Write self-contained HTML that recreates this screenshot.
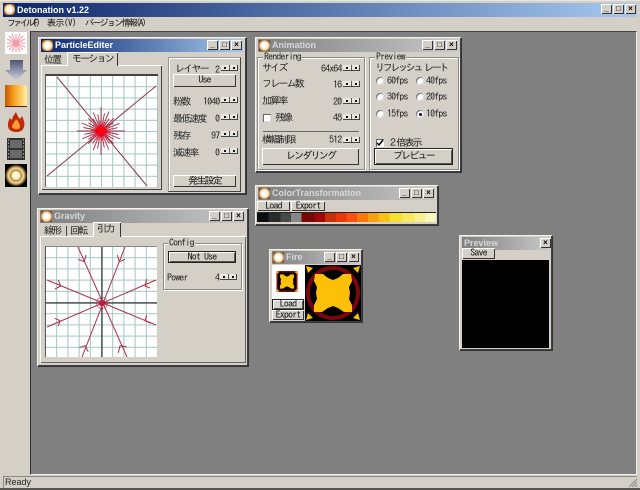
<!DOCTYPE html>
<html><head><meta charset="utf-8"><style>
html,body{margin:0;padding:0;background:#000}
#root{position:relative;width:640px;height:490px;overflow:hidden;background:#d4d0c8;font:10px "IPAGothic","Liberation Sans","Noto Sans CJK JP",sans-serif;color:#111;filter:blur(.3px)}
.a{position:absolute;white-space:nowrap}
.win{position:absolute;background:#d4d0c8;box-sizing:border-box;box-shadow:inset 1px 1px 0 #f4f2ec,inset -1px -1px 0 #404040,1px 1px 0 #333}
.tb{position:absolute;left:3px;right:3px;top:2px;height:13px;background:linear-gradient(90deg,#808080,#c8c8c8);color:#d8d8d8;font:bold 9px/13px "Liberation Sans",sans-serif;padding-left:14px}
.tb.on{background:linear-gradient(90deg,#0a246a,#a6caf0);color:#fff}
.ic{position:absolute;left:1px;top:1px;width:11px;height:11px;border-radius:2px;background:radial-gradient(circle,#fff 30%,#f5d79a 55%,#6b2a10 85%)}
.wb{position:absolute;top:1px;width:11px;height:10px;background:#d4d0c8;box-shadow:inset 1px 1px 0 #fff,inset -1px -1px 0 #333;color:#000;font:bold 8px/10px "Liberation Sans",sans-serif;text-align:center}
.btn{position:absolute;background:#d4d0c8;box-sizing:border-box;box-shadow:inset 1px 1px 0 #fff,inset -1px -1px 0 #333;text-align:center;color:#111;font:10px "IPAGothic","Liberation Sans",sans-serif;letter-spacing:-.9px}
.btn.d{outline:1px solid #222;outline-offset:-1px;box-shadow:inset 2px 2px 0 #fff,inset -2px -2px 0 #555}
.btn.j{letter-spacing:-1.800px}
.sp{position:absolute;width:17px;height:6px;background:linear-gradient(90deg,#e8e6e0 0 8px,#555 8px 9px,#e8e6e0 9px);box-shadow:inset 0 -1px 0 #444,inset -1px 0 0 #444}
.sp:before,.sp:after{content:"";position:absolute;top:2px;width:2px;height:2px;background:#111}
.sp:before{left:3px}.sp:after{left:12px}
.grp{position:absolute;box-sizing:border-box;border:1px solid #8c8a84;box-shadow:1px 1px 0 #fff,inset 1px 1px 0 #fff}
.lg{position:absolute;top:-6px;left:5px;background:#d4d0c8;padding:0 1px;font:10px/10px "IPAGothic","Liberation Sans",sans-serif;letter-spacing:-.9px;color:#222}
.l{position:absolute;white-space:nowrap;font-size:10px;line-height:12px;letter-spacing:-1.800px;color:#222}
.m{font:10px/10px "IPAGothic","Liberation Sans",sans-serif;letter-spacing:-.9px}
.rd{position:absolute;width:8px;height:8px;border-radius:50%;background:#fff;box-shadow:inset 1px 1px 0 #777,inset -1px -1px 0 #ddd}
.pn{position:absolute;box-sizing:border-box;border:1px solid #999;border-right-color:#444;border-bottom-color:#444;box-shadow:inset 1px 1px 0 #fff}
</style></head><body><div id="root">
<svg width="0" height="0" style="position:absolute"><defs>
<pattern id="g" width="11.2" height="11.2" patternUnits="userSpaceOnUse"><rect width="11.2" height="11.2" fill="#fff"/><path d="M10.7 0V11.2M0 10.7H11.2" stroke="#a3c4c4" stroke-width="1"/></pattern>
<path id="q" d="M55 55l24 0M55 55l17.600 3.500M55 55l19.400 8M55 55l12.500 8.300M55 55l12.700 12.700M55 55l8.300 12.500M55 55l7.700 18.500M55 55l3.300 16.700" fill="none"/>
<linearGradient id="ag" x1="0" y1="0" x2="0" y2="1"><stop offset="0" stop-color="#505470"/><stop offset="1" stop-color="#d4d6e4"/></linearGradient>
<linearGradient id="tg"><stop offset="0" stop-color="#c85800"/><stop offset=".4" stop-color="#f8a020"/><stop offset="1" stop-color="#fff0a0"/></linearGradient>
<radialGradient id="rg"><stop offset="0" stop-color="#fff8e0"/><stop offset=".35" stop-color="#ffeeb0"/><stop offset=".48" stop-color="#a08050"/><stop offset=".65" stop-color="#f8e0a0"/><stop offset=".82" stop-color="#b08838"/><stop offset="1" stop-color="#000"/></radialGradient>
</defs></svg>

<!-- main frame -->
<div class="a" style="left:3px;top:3px;width:634px;height:14px;background:linear-gradient(90deg,#0a246a,#a6caf0)"></div>
<div class="a" style="left:4px;top:4px;width:11px;height:11px;border-radius:2px;background:radial-gradient(circle,#fff 30%,#f3d08c 55%,#5a2a10 85%)"></div>
<div class="a" style="left:17px;top:3px;color:#fff;font:bold 9px/14px 'Liberation Sans',sans-serif">Detonation v1.22</div>
<div class="wb" style="left:601px;top:4px;height:10px">_</div><div class="wb" style="left:613px;top:4px">□</div><div class="wb" style="left:625px;top:4px">×</div>
<div class="a" style="left:7px;top:17px;font-size:9px;line-height:13px;letter-spacing:-2.700px">ファイル(F)</div>
<div class="a" style="left:47px;top:17px;font-size:9px;line-height:13px;letter-spacing:-.5px">表示(V)</div>
<div class="a" style="left:85px;top:17px;font-size:9px;line-height:13px;letter-spacing:-1.700px">バージョン情報(A)</div>

<!-- toolbar icons -->
<svg class="a" style="left:4px;top:31px" width="24" height="165" viewBox="0 0 24 165">
<rect x="1" y="1" width="22" height="22" fill="#fff"/>
<g stroke="#f29aa6" stroke-width="1"><path d="M12 3V21M3 12H21M5 5L19 19M5 19L19 5M8 3L16 21M16 3L8 21M3 8L21 16M3 16L21 8"/></g>
<path d="M6 29H19V39H23L12 50L1 39H6Z" fill="url(#ag)"/>
<rect x="1" y="54" width="22" height="22" fill="url(#tg)"/><rect x="1" y="75" width="22" height="1" fill="#602000"/>
<path d="M12 81C14 86 15 87 16 88C17 87 17 86 18 85C21 91 21 95 19 98C17 102 8 102 5 98C3 95 4 90 6 87C7 88 8 89 8 90C8 86 10 84 12 81Z" fill="#c02808"/>
<path d="M12 88C14 90 16 93 16 96C16 99 9 99 8 96C8 93 11 91 12 88Z" fill="#f8a030"/>
<rect x="3" y="107" width="18" height="22" fill="#303030"/><rect x="6" y="109" width="12" height="8" fill="#6a6a6a"/><rect x="6" y="119" width="12" height="8" fill="#6a6a6a"/>
<path d="M4.500 108V128M19.500 108V128" stroke="#aaa" stroke-width="1" stroke-dasharray="1.500 2"/>
<rect x="1" y="133" width="22" height="23" fill="#000"/><circle cx="12" cy="144.500" r="11" fill="url(#rg)"/>
</svg>

<!-- MDI client -->
<div class="a" style="left:30px;top:31px;width:607px;height:444px;background:#808080;box-sizing:border-box;border-top:1px solid #444;border-left:1px solid #333;border-right:1px solid #eee;border-bottom:1px solid #eee"></div>
<!-- status -->
<div class="a" style="left:3px;top:476px;width:634px;height:12px;box-shadow:inset 1px 1px 0 #888"></div>
<div class="a" style="left:5px;top:476px;font:9px/13px 'Liberation Sans',sans-serif;color:#222">Ready</div>
<svg class="a" style="left:628px;top:478px" width="10" height="10"><path d="M9 1L1 9M9 4L4 9M9 7L7 9" stroke="#888"/></svg>
<div class="a" style="left:0;top:488px;width:640px;height:2px;background:#555"></div>
<div class="a" style="left:0;top:0;width:640px;height:1px;background:#e8e6e0"></div>

<!-- ParticleEditer -->
<div class="win" style="left:38px;top:37px;width:208px;height:157px">
<div class="tb on"><i class="ic"></i>ParticleEditer<span class="wb" style="left:166px">_</span><span class="wb" style="left:178px">□</span><span class="wb" style="left:190px">×</span></div>
<div class="a" style="left:3px;top:28px;width:121px;height:125px;box-shadow:inset 1px 1px 0 #fff,inset -1px -1px 0 #444"></div>
<div class="l" style="left:6px;top:17px">位置</div>
<div class="a" style="left:29px;top:15px;width:51px;height:14px;background:#d4d0c8;box-shadow:inset 1px 1px 0 #fff,inset -1px 0 0 #333"></div>
<div class="l" style="left:34px;top:16px">モーション</div>
<svg class="a" style="left:7px;top:37px;border-top:2px solid #444;border-left:1px solid #666" width="112" height="111"><rect width="112" height="111" fill="url(#g)"/>
<path d="M11 1L101 110M110 10L1 100" stroke="#8a3a48" stroke-width="1" fill="none"/>
<g stroke="#a82a42" stroke-width=".9"><use href="#q"/><use href="#q" transform="rotate(90 55 55)"/><use href="#q" transform="rotate(180 55 55)"/><use href="#q" transform="rotate(270 55 55)"/></g>
<circle cx="55" cy="55" r="7" fill="none" stroke="#d8304a" stroke-width="6" stroke-dasharray="1 1" opacity=".7"/>
<path d="M55 48L62 55L55 62L48 55Z" fill="#f0001a"/><circle cx="55" cy="55" r="4" fill="#ff0010"/>
</svg>
<div class="pn" style="left:130px;top:20px;width:73px;height:135px"></div>
<div class="l" style="left:137px;top:26px">レイヤー</div><div class="l m" style="left:177px;top:28px">2</div><div class="sp" style="left:183px;top:28px"></div>
<div class="btn" style="left:135px;top:37px;width:63px;height:13px;line-height:13px">Use</div>
<div class="l" style="left:135px;top:59px">粉数</div><div class="l m" style="left:165px;top:60px">1040</div><div class="sp" style="left:183px;top:60px"></div>
<div class="l" style="left:135px;top:76px">最低速度</div><div class="l m" style="left:177px;top:77px">0</div><div class="sp" style="left:183px;top:77px"></div>
<div class="l" style="left:135px;top:93px">残存</div><div class="l m" style="left:173px;top:94px">97</div><div class="sp" style="left:183px;top:94px"></div>
<div class="l" style="left:135px;top:110px">減速率</div><div class="l m" style="left:177px;top:111px">0</div><div class="sp" style="left:183px;top:111px"></div>
<div class="btn j" style="left:135px;top:138px;width:63px;height:12px;line-height:12px">発生設定</div>
</div>

<!-- Animation -->
<div class="win" style="left:255px;top:37px;width:206px;height:135px">
<div class="tb"><i class="ic"></i>Animation<span class="wb" style="left:164px">_</span><span class="wb" style="left:176px">□</span><span class="wb" style="left:188px">×</span></div>
<div class="grp" style="left:2px;top:20px;width:108px;height:113px"><span class="lg">Rendering</span></div>
<div class="grp" style="left:114px;top:20px;width:90px;height:113px"><span class="lg">Preview</span></div>
<div class="l" style="left:7px;top:25px">サイズ</div><div class="l m" style="left:66px;top:27px">64x64</div><div class="sp" style="left:88px;top:28px"></div>
<div class="l" style="left:7px;top:41px">フレーム数</div><div class="l m" style="left:78px;top:43px">16</div><div class="sp" style="left:88px;top:44px"></div>
<div class="l" style="left:7px;top:58px">加算率</div><div class="l m" style="left:78px;top:60px">20</div><div class="sp" style="left:88px;top:61px"></div>
<div class="a" style="left:8px;top:77px;width:8px;height:8px;background:#fff;box-shadow:inset 1px 1px 0 #666,inset -1px -1px 0 #ddd"></div>
<div class="l" style="left:20px;top:75px">残像</div><div class="l m" style="left:78px;top:76px">48</div><div class="sp" style="left:88px;top:77px"></div>
<div class="a" style="left:8px;top:94px;width:96px;height:1px;background:#666"></div>
<div class="l" style="left:7px;top:97px">横幅制限</div><div class="l m" style="left:74px;top:98px">512</div><div class="sp" style="left:88px;top:100px"></div>
<div class="btn j" style="left:7px;top:111px;width:97px;height:17px;line-height:17px">レンダリング</div>
<div class="l" style="left:120px;top:25px;letter-spacing:-2.300px">リフレッシュ レート</div>
<i class="rd" style="left:121px;top:40px"></i><div class="l m" style="left:132px;top:39px">60fps</div><i class="rd" style="left:161px;top:40px"></i><div class="l m" style="left:171px;top:39px">40fps</div>
<i class="rd" style="left:121px;top:56px"></i><div class="l m" style="left:132px;top:55px">30fps</div><i class="rd" style="left:161px;top:56px"></i><div class="l m" style="left:171px;top:55px">20fps</div>
<i class="rd" style="left:121px;top:73px"></i><div class="l m" style="left:132px;top:72px">15fps</div><i class="rd" style="left:161px;top:73px"></i><div class="a" style="left:164px;top:76px;width:3px;height:3px;background:#000;border-radius:2px"></div><div class="l m" style="left:171px;top:72px">10fps</div>
<svg class="a" style="left:121px;top:102px;background:#fff;box-shadow:inset 1px 1px 0 #666" width="8" height="8"><path d="M1 4L3 6L7 1" stroke="#000" stroke-width="1.500" fill="none"/></svg>
<div class="l" style="left:133px;top:100px">２倍表示</div>
<div class="btn d j" style="left:119px;top:111px;width:79px;height:17px;line-height:17px">プレビュー</div>
</div>

<!-- ColorTransformation -->
<div class="win" style="left:255px;top:185px;width:183px;height:40px">
<div class="tb"><i class="ic"></i>ColorTransformation<span class="wb" style="left:141px">_</span><span class="wb" style="left:153px">□</span><span class="wb" style="left:165px">×</span></div>
<div class="btn" style="left:2px;top:16px;width:33px;height:10px;line-height:10px">Load</div>
<div class="btn" style="left:36px;top:16px;width:34px;height:10px;line-height:10px">Export</div>
<div class="a" style="left:2px;top:27px;width:179px;height:10px;border-top:1px solid #222;box-sizing:border-box;background:linear-gradient(90deg,#0c0c0c 0 6.500%,#2a2a2a 6.500% 13%,#484848 13% 19%,#888 19% 25%,#780808 25% 32%,#a00808 32% 38%,#c83008 38% 44%,#e83808 44% 50%,#f85010 50% 56%,#f87808 56% 62%,#f8a010 62% 68%,#f8c010 68% 74%,#f8e030 74% 81%,#f8e860 81% 88%,#f8f090 88% 94%,#f8f8c0 94%)"></div>
</div>

<!-- Gravity -->
<div class="win" style="left:37px;top:208px;width:211px;height:158px">
<div class="tb"><i class="ic"></i>Gravity<span class="wb" style="left:169px">_</span><span class="wb" style="left:181px">□</span><span class="wb" style="left:193px">×</span></div>
<div class="a" style="left:3px;top:28px;width:206px;height:127px;box-shadow:inset 1px 1px 0 #fff,inset -1px -1px 0 #666"></div>
<div class="l" style="left:7px;top:17px">線形</div><div class="a" style="left:29px;top:18px;width:1px;height:10px;background:#444"></div>
<div class="l" style="left:33px;top:17px">回転</div>
<div class="a" style="left:56px;top:14px;width:28px;height:15px;background:#d4d0c8;box-shadow:inset 1px 1px 0 #fff,inset -1px 0 0 #333"></div>
<div class="l" style="left:60px;top:15px">引力</div>
<svg class="a" style="left:8px;top:38px;border-left:1px solid #555;border-top:1px solid #888" width="111" height="110"><rect width="111" height="110" fill="url(#g)"/>
<path d="M0 56H111M56 0V110" stroke="#111" stroke-width="1"/>
<g fill="none" stroke="#a83048" stroke-width="1"><path d="M32 0L81 110M79 0L36 110M1 33L110 78M110 33L1 80"/>
<path d="M32.300 12.300L38.300 14.700L40 8M79 12.300L73.300 14.700L71.300 8M9 42L14.700 39L12.300 33M104 41L99 39L100.700 32.300M9 71.300L14 73.700L12.300 79M104.700 76.300L99 73.700L100.700 68M33.300 100.700L39 98.700L42.300 104.700M80.700 99.700L74 98.700L72.300 105.700"/></g>
<circle cx="56" cy="56" r="3.500" fill="#c01838" opacity=".85"/><circle cx="56" cy="56" r="5.500" fill="none" stroke="#b03048" opacity=".6"/>
</svg>
<div class="grp" style="left:126px;top:35px;width:79px;height:47px"><span class="lg" style="left:4px">Config</span></div>
<div class="btn d" style="left:131px;top:43px;width:68px;height:12px;line-height:12px">Not Use</div>
<div class="l m" style="left:130px;top:65px">Power</div><div class="l m" style="left:178px;top:65px">4</div><div class="sp" style="left:183px;top:66px"></div>
</div>

<!-- Fire -->
<div class="win" style="left:269px;top:249px;width:93px;height:73px">
<div class="tb"><i class="ic"></i>Fire<span class="wb" style="left:52px">_</span><span class="wb" style="left:64px">□</span><span class="wb" style="left:76px">×</span></div>
<div class="a" style="left:3px;top:16px;width:33px;height:34px;background:#fff"></div>
<svg class="a" style="left:7px;top:22px" width="22" height="21" viewBox="0 0 56 56"><rect width="56" height="56" fill="#000"/><rect x="2" y="2" width="52" height="52" fill="none" stroke="#7a0808" stroke-width="4"/><path d="M28 15L33 13L38 9L46 9L47 16L44 22L45 28L44 34L47 40L47 47L39 47L33 43L28 41L23 43L17 47L9 47L9 40L12 34L11 28L12 22L9 16L10 9L18 9L23 13Z" fill="#fcc008"/><path d="M0 0L8 2L2 8ZM56 0L48 2L54 8ZM0 56L8 54L2 48ZM56 56L48 54L54 48Z" fill="#fcc008"/></svg>
<div class="btn d" style="left:3px;top:50px;width:32px;height:11px;background:#d8d6d0;line-height:11px">Load</div>
<div class="btn" style="left:3px;top:61px;width:32px;height:10px;line-height:10px">Export</div>
<svg class="a" style="left:36px;top:16px" width="56" height="56" viewBox="0 0 56 56"><rect width="56" height="56" fill="#000"/>
<circle cx="28" cy="28" r="25" fill="none" stroke="#7a0808" stroke-width="4"/>
<path d="M28 15L33 13L38 9L46 9L47 16L44 22L45 28L44 34L47 40L47 47L39 47L33 43L28 41L23 43L17 47L9 47L9 40L12 34L11 28L12 22L9 16L10 9L18 9L23 13Z" fill="#fcc008"/>
<path d="M1 1L8 3L3 8ZM55 1L48 3L53 8ZM1 55L8 53L3 48ZM55 55L48 53L53 48Z" fill="#fcc008"/>
</svg>
</div>

<!-- Preview -->
<div class="win" style="left:459px;top:235px;width:93px;height:115px">
<div class="tb" style="padding-left:2px">Preview<span class="wb" style="left:78px">×</span></div>
<div class="btn" style="left:3px;top:13px;width:33px;height:11px;line-height:11px">Save</div>
<div class="a" style="left:3px;top:25px;width:87px;height:88px;background:#000"></div>
</div>
</div></body></html>
